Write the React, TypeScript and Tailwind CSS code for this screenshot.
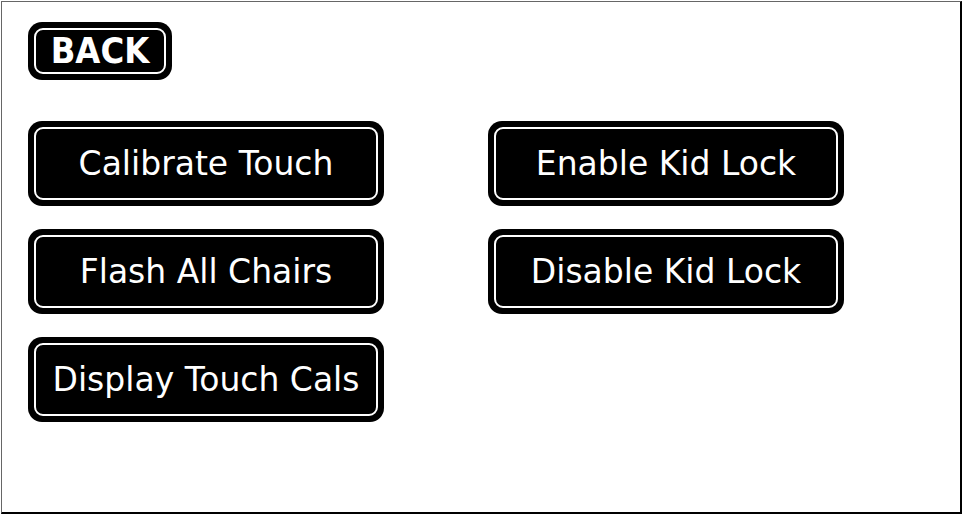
import React from 'react'

const font = { fontFamily: '"DejaVu Sans", Tahoma, Verdana, sans-serif' }
const boldFont = { fontFamily: '"DejaVu Sans Condensed", "DejaVu Sans", Tahoma, sans-serif' }

function PanelButton({ label, className = '' }: { label: string; className?: string }) {
  return (
    <button type="button" className={`rounded-[14px] bg-black p-[6px] ${className}`}>
      <div className="flex h-full w-full items-center justify-center rounded-[9px] border-[2.5px] border-white">
        <span className="text-[33px] leading-none text-white" style={font}>
          {label}
        </span>
      </div>
    </button>
  )
}

export default function App() {
  return (
    <div className="h-[516px] w-[963px] bg-white">
      <div className="ml-px mt-px h-[513px] w-[961px] border-l border-t border-r-2 border-b-2 border-l-[#666] border-t-[#666] border-r-black border-b-black">
        <div className="pl-[26px] pt-[20px]">
          <button type="button" className="h-[58px] w-[144px] rounded-[14px] bg-black p-[6px]">
            <div className="flex h-full w-full items-center justify-center rounded-[9px] border-[2.5px] border-white">
              <span className="text-[36px] font-bold leading-none text-white" style={boldFont}>
                BACK
              </span>
            </div>
          </button>

          <div className="mt-[41px] grid grid-cols-[356px_356px] gap-x-[104px] gap-y-[23px]">
            <PanelButton label="Calibrate Touch" className="h-[85px]" />
            <PanelButton label="Enable Kid Lock" className="h-[85px]" />
            <PanelButton label="Flash All Chairs" className="h-[85px]" />
            <PanelButton label="Disable Kid Lock" className="h-[85px]" />
            <PanelButton label="Display Touch Cals" className="h-[85px]" />
          </div>
        </div>
      </div>
    </div>
  )
}
